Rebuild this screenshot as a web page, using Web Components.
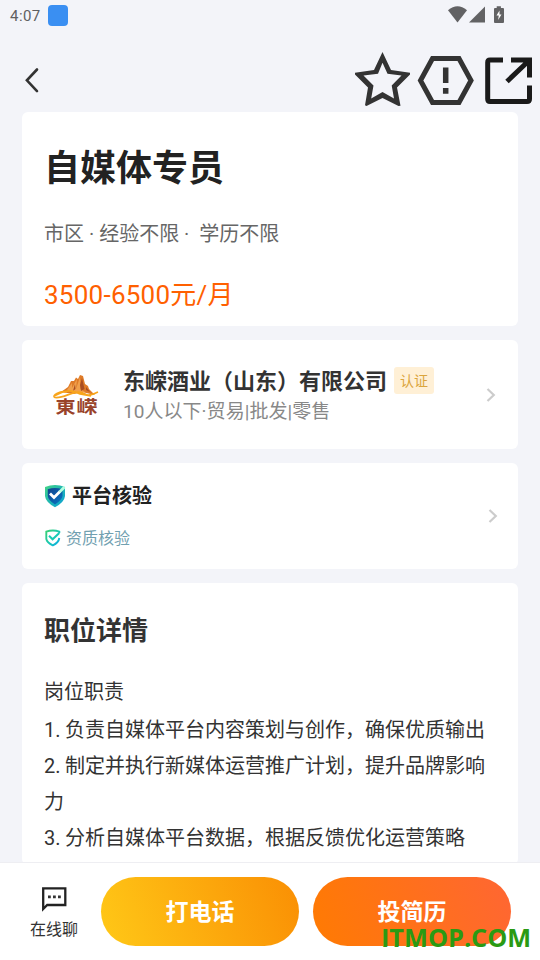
<!DOCTYPE html>
<html lang="zh-CN">
<head>
<meta charset="utf-8">
<title>职位详情</title>
<style>
html,body{margin:0;height:100%;overflow:hidden}
body{font-family:Roboto,"Noto Sans CJK SC",sans-serif;background:#f3f4f9;color:#333}
</style>
</head>
<body>
<job-page></job-page>
<script>
const define = (name, html) => customElements.define(name, class extends HTMLElement {
  constructor() {
    super();
    const t = document.createElement('template');
    t.innerHTML = html;
    this.attachShadow({mode: 'open'}).append(t.content.cloneNode(true));
  }
});

define('status-bar', `
<style>
:host{display:flex;height:32px;align-items:flex-start;color:#5f5f61}
.time{font-size:15px;line-height:32px;margin-left:10px;width:38px;letter-spacing:.45px;white-space:nowrap}
.app{width:20px;height:21px;border-radius:4px;background:#3a8ff2;margin-top:5px}
svg{margin-left:auto;display:block}
</style>
<span class="time">4:07</span><span class="app"></span>
<svg width="92" height="32" viewBox="448 0 92 32" fill="#626264">
<path d="M457.5 22.5L448 10.2Q457.500 2.500 467 10.200Z"/>
<path d="M485 6.500V22.500H469Z"/>
<path d="M496.700 6.200h4.200V8h2.100a1 1 0 0 1 1 1V22a1 1 0 0 1-1 1h-8a1 1 0 0 1-1-1V9a1 1 0 0 1 1-1h1.700Z"/>
<path fill="#fff" d="M499.500 10.500L496.500 15.500h2.300l-.7 4.500 3.400-5.500h-2Z"/>
</svg>`);

define('nav-bar', `
<style>
:host{display:flex;height:80px}
svg{display:block}
.back{margin-right:auto}
</style>
<svg class="back" width="60" height="80" viewBox="0 32 60 80"><path d="M37 69.500L26.900 80.300 37 91.100" fill="none" stroke="#333" stroke-width="2.600" stroke-linecap="round"/></svg>
<svg width="192" height="80" viewBox="348 32 192 80" fill="none" stroke="#333" stroke-width="5">
<path fill="#333" stroke="none" fill-rule="evenodd" d="M382.500 52L391 70 410 72.700 410 74.500 397 87.500 400.500 105.700 398.500 106 382.500 98 366.500 106 365 105.300 368 87.500 355 74.500 355 72.700 374 70ZM382.500 62.800L378 73.800 363.500 75.500 373.500 85.500 371.200 98.500 382.500 92 394 98.500 391.700 85.500 401.500 75.500 387.500 73.800Z"/>
<path d="M432.500 58.500H459L471 80.500 459 102.500H432.500L420.500 80.500Z"/>
<path d="M445.700 67.500V83M445.700 88V93.700" stroke-width="5.500"/>
<g stroke="#1a1a1a"><path d="M503 60H490Q487.700 60 487.700 62.500V99Q487.700 101.500 490 101.500H527Q529.500 101.500 529.500 99V85.500M511 60H529.500V77.500M528 61.500L507 81.500"/></g>
</svg>`);

define('info-card', `
<style>
:host{display:block;box-sizing:border-box;margin:0 22px 14px;padding:0 22px;background:#fff;border-radius:6px}
</style><slot></slot>`);

define('job-summary', `
<style>
:host{display:block;height:214px}
h1{margin:0;padding-top:31px;font-size:36px;line-height:52px;font-weight:700;color:#222}
.meta{padding-top:23px;font-size:20px;line-height:32px;color:#666;white-space:pre}
.pay{padding-top:25px;font-size:26px;line-height:40px;color:#ff6000;letter-spacing:.25px}
</style>
<h1>自媒体专员</h1><div class="meta">市区 · 经验不限 ·  学历不限</div><div class="pay">3500-6500元/月</div>`);

define('chevron-right', `
<style>:host{display:block;margin-left:auto;width:10px;height:16px}svg{display:block}</style>
<svg width="10" height="16" viewBox="0 0 10 16"><path d="M1.500 2L7.800 8 1.500 14" fill="none" stroke="#ccc" stroke-width="2.200"/></svg>`);

define('company-logo', `
<style>:host{display:block;width:66px;height:66px}svg{display:block}text{font:700 20px "Noto Sans CJK SC",sans-serif;fill:#99432a}</style>
<svg width="66" height="66" viewBox="44 361 66 66">
<path fill="#df7b28" d="M61 391L68 386 71 380 74 380 76 376.500 78 378 80 374 83 375 85 383 88 385 89 388 95 394 82 391 74 393Z"/>
<path fill="#f0a04c" d="M67 389L72 382 72 387 77 378 76 388 80 376 80.500 388 85 391 76 391Z"/>
<path fill="#a94e22" d="M82 377L84.500 388 81 390 80 384ZM75 383L75.500 388 73 390ZM86 386L90 391 86 389Z"/>
<path d="M67 391C60 389 51 395 55 396.500 65 398 75 387 85 393 89 396 93 393 98 391M54 395C67 388 72 389 80 393L91 395" fill="none" stroke="#f8a51b" stroke-width="1.700"/>
<g transform="translate(0 412.200) scale(1 .86)"><text x="55.500" y="0" textLength="20" lengthAdjust="spacingAndGlyphs">東</text><text x="76.500" y="0" textLength="21" lengthAdjust="spacingAndGlyphs">嵘</text></g>
</svg>`);

define('company-row', `
<style>
:host{display:flex;height:109px;align-items:center}
.text{margin-left:13px;padding-top:3px}
.name{display:flex;align-items:center;height:32px;font-size:22px;line-height:32px;font-weight:700;color:#333;white-space:nowrap}
.tag{margin-left:7px;width:40px;height:27px;line-height:28px;border-radius:3px;background:#fff0d6;color:#dba53c;font-size:14px;font-weight:400;text-align:center;margin-bottom:4px}
.sub{font-size:19px;line-height:28px;color:#888;white-space:nowrap;letter-spacing:.05px}
</style>
<company-logo></company-logo>
<div class="text"><div class="name">东嵘酒业（山东）有限公司<span class="tag">认证</span></div><div class="sub">10人以下·贸易|批发|零售</div></div>
<chevron-right></chevron-right>`);

define('verify-row', `
<style>
:host{display:flex;height:106px;align-items:center;margin-right:-2px}
.rows{margin-top:-4px}
.head,.item{display:flex;align-items:center}
.head{height:40px;font-size:20px;line-height:30px;font-weight:700;color:#222;gap:6px}
.item{height:30px;margin-top:6px;font-size:16px;color:#71a0b0;gap:4px}
.item svg{position:relative;top:1px}
svg{display:block}
</style>
<div class="rows">
<div class="head"><svg width="22" height="24" viewBox="0 0 22 24"><defs><linearGradient id="a" x2="1" y2="1"><stop stop-color="#45d486"/><stop offset=".45" stop-color="#21b9ae"/><stop offset="1" stop-color="#0a9ed8"/></linearGradient><linearGradient id="b" x2="1" y2="1"><stop stop-color="#11418c"/><stop offset="1" stop-color="#0877c5"/></linearGradient></defs><path fill="url(#a)" d="M1 3Q11-1 21 3V12Q20.500 18 11 23.300 1.500 18 1 12Z"/><path fill="url(#b)" d="M3.800 5.300Q11 2.500 18.500 5.300V12Q18 16 11 20.500 4 16 3.800 12Z"/><path d="M6 9.500L10 13.500 16 7.500" fill="none" stroke="#fff" stroke-width="2.800"/><path d="M15.500 8L20.500 3" stroke="#b6ffe0" stroke-width="2.800"/></svg><span>平台核验</span></div>
<div class="item"><svg width="18" height="18" viewBox="0 0 18 18"><defs><linearGradient id="c" x2="1" y2="1"><stop stop-color="#39cf73"/><stop offset=".55" stop-color="#19c8b6"/><stop offset="1" stop-color="#0ba9e8"/></linearGradient></defs><path d="M15.300 4V2.700Q9 .2 2.300 2.700V10Q3 13.500 8.800 16.300 14.700 13.500 15.300 9" fill="none" stroke="url(#c)" stroke-width="1.900"/><path d="M5 6.800L8.600 10.300 15.300 4" fill="none" stroke="#18cab4" stroke-width="2"/></svg><span>资质核验</span></div>
</div><chevron-right></chevron-right>`);

define('job-detail', `
<style>
:host{display:block;height:282px;overflow:hidden}
h2{margin:0;padding-top:28px;font-size:26px;line-height:40px;font-weight:700;color:#333}
p{margin:0;font-size:20px;line-height:36px;color:#333;white-space:nowrap;word-spacing:-.4px}
.first{padding-top:23px;margin-bottom:2px}
</style>
<h2>职位详情</h2><p class="first">岗位职责</p>
<p>1. 负责自媒体平台内容策划与创作，确保优质输出</p>
<p>2. 制定并执行新媒体运营推广计划，提升品牌影响<br>力</p>
<p>3. 分析自媒体平台数据，根据反馈优化运营策略</p>`);

define('pill-button', `
<style>
:host{display:block;box-sizing:border-box;width:198px;height:69px;padding-top:1px;border-radius:35px;color:#fff;font-size:23px;font-weight:700;line-height:69px;text-align:center}
:host([kind=call]){background:linear-gradient(70deg,#ffc817,#fa8f04)}
:host([kind=apply]){background:linear-gradient(70deg,#ff7b02,#ff6633)}
</style><slot></slot>`);

define('action-bar', `
<style>
:host{display:flex;box-sizing:border-box;height:98px;border-top:1px solid #eeeef2;background:#fff;padding:14px 29px 0 30px;position:absolute;left:0;right:0;bottom:0}
.chat{width:48px;margin-right:23px;font-size:16px;line-height:26px;color:#333;text-align:center}
svg{display:block;margin:9px 0 5px 11px}
pill-button+pill-button{margin-left:14px}
.mark{position:absolute;left:381px;top:55px;font:700 25.300px/38px "Open Sans",sans-serif;color:#2a9a13;white-space:nowrap}
</style>
<div class="chat"><svg width="27" height="26" viewBox="0 0 27 26"><path d="M2.200 23V2.400H24.300V19H6.200Z" fill="none" stroke="#222" stroke-width="2.300"/><path d="M7 9.500h2.800v2.800H7zM12 9.500h2.800v2.800H12zM17 9.500h2.800v2.800H17z" fill="#333"/></svg>在线聊</div>
<pill-button kind="call">打电话</pill-button><pill-button kind="apply">投简历</pill-button>
<span class="mark">ITMOP.COM</span>`);

define('job-page', `
<style>:host{display:block;position:relative;width:540px;height:960px;overflow:hidden}</style>
<status-bar></status-bar><nav-bar></nav-bar>
<info-card><job-summary></job-summary></info-card>
<info-card><company-row></company-row></info-card>
<info-card><verify-row></verify-row></info-card>
<info-card><job-detail></job-detail></info-card>
<action-bar></action-bar>`);
</script>
</body>
</html>
